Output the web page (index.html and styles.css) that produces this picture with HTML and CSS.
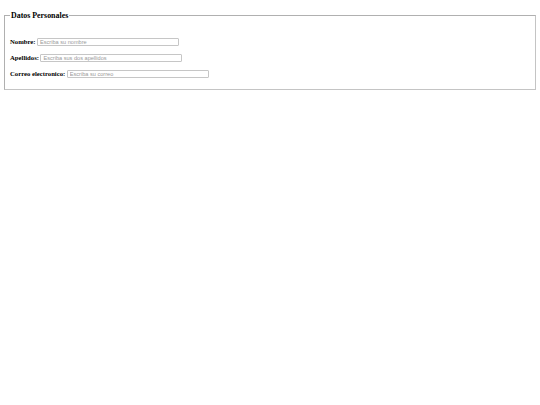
FILE: index.html
```html
<!DOCTYPE html>
<html lang="es">
<head>
<meta charset="utf-8">
<title>Datos Personales</title>
<link rel="stylesheet" href="styles.css">
</head>
<body>
<form class="form">
  <fieldset class="group">
    <legend class="group-title">Datos Personales</legend>
    <div class="rows">
      <div class="row">
        <label class="label" for="nombre">Nombre:</label>
        <input class="field" id="nombre" type="text" placeholder="Escriba su nombre">
      </div>
      <div class="row">
        <label class="label" for="apellidos">Apellidos:</label>
        <input class="field" id="apellidos" type="text" placeholder="Escriba sus dos apellidos">
      </div>
      <div class="row">
        <label class="label" for="correo">Correo electronico:</label>
        <input class="field" id="correo" type="text" placeholder="Escriba su correo">
      </div>
    </div>
  </fieldset>
</form>
</body>
</html>
```

FILE: styles.css
```css
html, body {
  background: #ffffff;
}
body {
  margin: 0;
  padding: 11px 4px 0;
  font-family: "Liberation Serif", "Times New Roman", serif;
  color: #000000;
}
.form {
  margin: 0;
}
.group {
  margin: 0;
  padding: 0 5px 11px 5px;
  border: 1px solid #c4c4c4;
  border-top-color: #b0b0b0;
  border-left-color: #b0b0b0;
}
.group-title {
  padding: 0 1px;
  margin-left: 0;
  font-weight: bold;
  font-size: 7.9px;
  line-height: 9px;
}
.rows {
  display: flex;
  flex-direction: column;
  gap: 7.5px;
  padding-top: 17.5px;
}
.row {
  display: flex;
  align-items: center;
  gap: 1.5px;
}
.label {
  font-weight: bold;
  font-size: 6.7px;
  line-height: 8px;
}
.field {
  box-sizing: border-box;
  width: 142px;
  height: 8.5px;
  margin: 0;
  padding: 0 2px;
  border: 1px solid #c6c6c6;
  border-radius: 1px;
  font-family: "Liberation Sans", Arial, sans-serif;
  font-size: 5.6px;
  line-height: 6.5px;
  background: #ffffff;
}
.field::placeholder {
  color: #9a9a9a;
}
```
